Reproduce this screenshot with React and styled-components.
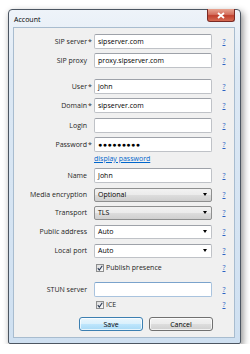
import React from "react";
import styled, { createGlobalStyle } from "styled-components";

const Global = createGlobalStyle`
  body {
    margin: 0;
    background: #ffffff;
    font-family: "Open Sans", "Noto Sans", sans-serif;
  }
`;

const Window = styled.div`
  margin: 9px 0 0 8px;
  width: 233px;
  height: 335px;
  box-sizing: border-box;
  border: 1px solid #4c5662;
  border-radius: 4px 4px 2px 2px;
  background: linear-gradient(to bottom, #eef3f9 0%, #dce8f4 20%, #cfe0f1 100%);
  box-shadow: 2px 3px 7px rgba(0, 0, 0, 0.45);
  display: flex;
  flex-direction: column;
  padding: 0 5px 5px 4px;
`;

const TitleBar = styled.div`
  height: 17px;
  display: flex;
  align-items: center;
  justify-content: space-between;
`;

const Title = styled.span`
  font-size: 7px;
  color: #000;
  padding-left: 1px;
  margin-top: 1px;
`;

const CloseButton = styled.div`
  width: 28px;
  height: 13px;
  align-self: flex-start;
  margin-top: -1px;
  box-sizing: border-box;
  border: 1px solid #7a2a24;
  border-top: none;
  border-radius: 0 0 3px 3px;
  background: linear-gradient(to bottom, #e8a592 0%, #d4705f 45%, #c0402e 55%, #d66a52 100%);
  display: flex;
  align-items: center;
  justify-content: center;
`;

const Client = styled.div`
  flex: 1;
  background: #f0f0f0;
  border: 1px solid #a8bccf;
  display: flex;
  flex-direction: column;
  padding-top: 6px;
`;

const Row = styled.div`
  display: grid;
  grid-template-columns: 73px 7px 118px 8px 8px;
  align-items: center;
  height: ${(p) => p.$h || 15}px;
  margin-top: ${(p) => p.$top || 0}px;
`;

const Label = styled.span`
  font-size: 7px;
  color: #1e1e1e;
  text-align: right;
  white-space: nowrap;
`;

const Star = styled.span`
  font-size: 7px;
  color: #1e1e1e;
  padding-left: 1px;
`;

const Input = styled.div`
  height: 15px;
  box-sizing: border-box;
  background: #fff;
  border: 1px solid ${(p) => (p.$focus ? "#a9c3de" : "#bfc2c7")};
  border-top-color: ${(p) => (p.$focus ? "#7aa3cc" : "#9ea2a9")};
  border-radius: 2px;
  font-size: 7px;
  color: #000;
  display: flex;
  align-items: center;
  padding-left: 3px;
  letter-spacing: ${(p) => (p.$dots ? "0.5px" : "0")};
`;

const Select = styled.div`
  height: 14px;
  box-sizing: border-box;
  border: 1px solid ${(p) => (p.$ro ? "#8e8f8f" : "#bfc2c7")};
  border-top-color: ${(p) => (p.$ro ? "#8e8f8f" : "#9ea2a9")};
  border-radius: 2px;
  background: ${(p) =>
    p.$ro
      ? "linear-gradient(to bottom, #f2f2f2 0%, #ebebeb 49%, #dddddd 51%, #cfcfcf 100%)"
      : "#fff"};
  font-size: 7px;
  color: #000;
  display: flex;
  align-items: center;
  justify-content: space-between;
  padding: 0 4px 0 3px;
`;

const Arrow = styled.span`
  width: 0;
  height: 0;
  border-left: 2.5px solid transparent;
  border-right: 2.5px solid transparent;
  border-top: 3px solid #000;
`;

const Help = styled.a`
  font-size: 7px;
  color: #2a62c4;
  text-decoration: underline;
  text-align: center;
`;

const Link = styled.a`
  grid-column: 3;
  font-size: 7px;
  color: #0066cc;
  text-decoration: underline;
`;

const Check = styled.label`
  grid-column: 3;
  display: flex;
  align-items: center;
  gap: 2px;
  font-size: 7px;
  color: #1e1e1e;
  padding-left: 2px;
`;

const Box = styled.span`
  width: 8px;
  height: 8px;
  box-sizing: border-box;
  border: 1px solid #8e8f8f;
  background: linear-gradient(135deg, #dcdcdc, #fbfbfb);
  display: flex;
  align-items: center;
  justify-content: center;
`;

const Buttons = styled.div`
  display: flex;
  gap: 6px;
  margin: 7px 0 0 65px;
`;

const Button = styled.div`
  width: 64px;
  height: 14px;
  box-sizing: border-box;
  border: 1px solid ${(p) => (p.$default ? "#3c7fb1" : "#707070")};
  border-radius: 3px;
  background: ${(p) =>
    p.$default
      ? "linear-gradient(to bottom, #eaf6fd 0%, #d9f0fc 49%, #bee6fd 51%, #a7d9f5 100%)"
      : "linear-gradient(to bottom, #f2f2f2 0%, #ebebeb 49%, #dddddd 51%, #cfcfcf 100%)"};
  box-shadow: inset 0 0 0 1px rgba(255, 255, 255, 0.7);
  font-size: 7px;
  color: #000;
  display: flex;
  align-items: center;
  justify-content: center;
`;

const Tick = () => (
  <svg width="6" height="6" viewBox="0 0 6 6">
    <path d="M0.8 3.2 L2.3 5 L5.3 0.8" fill="none" stroke="#2b3a55" strokeWidth="1.1" />
  </svg>
);

const Field = ({ label, star, value, top, dots, focus }) => (
  <Row $top={top}>
    <Label>{label}</Label>
    <Star>{star ? "*" : ""}</Star>
    <Input $dots={dots} $focus={focus}>{value}</Input>
    <span />
    <Help>?</Help>
  </Row>
);

const Combo = ({ label, value, top, ro }) => (
  <Row $top={top}>
    <Label>{label}</Label>
    <Star />
    <Select $ro={ro}>
      <span>{value}</span>
      <Arrow />
    </Select>
    <span />
    <Help>?</Help>
  </Row>
);

const App = () => {
  return (
    <React.Fragment>
      <Global />
      <Window>
        <TitleBar>
          <Title>Account</Title>
          <CloseButton>
            <svg width="8" height="7" viewBox="0 0 8 7">
              <path d="M1 1 L7 6 M7 1 L1 6" stroke="#fff" strokeWidth="1.8" />
            </svg>
          </CloseButton>
        </TitleBar>
        <Client>
          <Field label="SIP server" star value="sipserver.com" />
          <Field label="SIP proxy" value="proxy.sipserver.com" top={4} />
          <Field label="User" star value="john" top={11} />
          <Field label="Domain" star value="sipserver.com" top={4} />
          <Field label="Login" value="" top={5} />
          <Field label="Password" star value="●●●●●●●●●" dots top={4} />
          <Row $h={11} $top={1}>
            <Link>display password</Link>
          </Row>
          <Field label="Name" value="John" top={4} />
          <Combo label="Media encryption" value="Optional" ro top={4} />
          <Combo label="Transport" value="TLS" ro top={3} />
          <Combo label="Public address" value="Auto" top={4} />
          <Combo label="Local port" value="Auto" top={4} />
          <Row $h={11} $top={4}>
            <Check>
              <Box>
                <Tick />
              </Box>
              Publish presence
            </Check>
            <span />
            <Help>?</Help>
          </Row>
          <Field label="STUN server" value="" top={9} focus />
          <Row $h={11} $top={2}>
            <Check>
              <Box>
                <Tick />
              </Box>
              ICE
            </Check>
            <span />
            <Help>?</Help>
          </Row>
          <Buttons>
            <Button $default>Save</Button>
            <Button>Cancel</Button>
          </Buttons>
        </Client>
      </Window>
    </React.Fragment>
  );
};

export default App;
